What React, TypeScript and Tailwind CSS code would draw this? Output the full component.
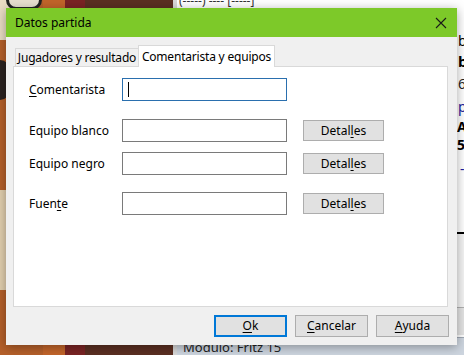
import React from "react";

const font = { fontFamily: '"Noto Sans", "Open Sans", sans-serif' };

function U({ children }: { children: React.ReactNode }) {
  return <span className="underline underline-offset-2">{children}</span>;
}

function Field({ label, mt, withButton }: { label: React.ReactNode; mt: string; withButton: boolean }) {
  return (
    <div className={`flex items-center ${mt}`}>
      <div className="w-[93px] whitespace-nowrap text-[12px] text-black">{label}</div>
      <div
        className={`h-[23px] w-[165px] bg-white ${
          withButton ? "border border-[#7a7a7a]" : "border border-[#2a6fae] flex items-center pl-[5px]"
        }`}
      >
        {!withButton && <div className="h-[15px] w-px bg-black" />}
      </div>
      {withButton && (
        <div className="ml-[16px] flex h-[21px] w-[81px] items-center justify-center whitespace-nowrap border border-[#adadad] bg-[#e1e1e1] text-[12px] text-black">
          Deta<span>l</span>
          <U>l</U>es
        </div>
      )}
    </div>
  );
}

export default function App() {
  return (
    <div className="relative h-[355px] w-[464px] overflow-hidden bg-white" style={font}>
      {/* background: chessboard left */}
      <div className="absolute left-0 top-0 h-[355px] w-[173px] bg-[#b5602a]">
        <div className="absolute left-0 top-0 h-[40px] w-[20px] bg-[#e9dcc4]" />
        <div className="absolute left-0 top-[190px] h-[100px] w-[20px] bg-[#e2cfae]" />
        <div className="absolute left-[6px] top-[-14px] h-[24px] w-[36px] rounded-b-[10px] border-[3px] border-[#222] bg-[#e8e0d0]" />
        <div className="absolute left-[-10px] top-[60px] h-[40px] w-[20px] rounded-full bg-[#2a2220]" />
        <div className="absolute left-[43px] top-0 h-[355px] w-[22px] bg-[#c2652a]" />
        <div className="absolute left-[65px] top-0 h-[355px] w-[20px] bg-[#7a2424]" />
        <div className="absolute left-[85px] top-0 h-[355px] w-[88px] bg-[#5b2f22]" />
      </div>
      {/* background: app right */}
      <div className="absolute left-[173px] top-0 h-[355px] w-[291px] border-l-4 border-[#d8d8d8] bg-white">
        <div className="absolute left-[2px] top-[-8px] whitespace-nowrap text-[12px] text-[#333]">(-----) ---- [-----]</div>
        <div className="absolute left-[281px] top-[30px] text-[14px] text-black">b</div>
        <div className="absolute left-[281px] top-[50px] text-[15px] font-bold text-black">b</div>
        <div className="absolute left-[281px] top-[73px] text-[14px] text-[#222]">6</div>
        <div className="absolute left-[281px] top-[96px] text-[14px] text-[#2020a0]">p</div>
        <div className="absolute left-[280px] top-[116px] whitespace-nowrap text-[14px] font-bold text-black">Ag</div>
        <div className="absolute left-[280px] top-[134px] text-[14px] font-bold text-black">5</div>
        <div className="absolute left-[283px] top-[158px] text-[14px] text-[#2020a0]">-</div>
        <div className="absolute left-[280px] top-[232px] h-[2px] w-[20px] bg-black" />
        <div className="absolute left-[280px] top-[234px] h-[73px] w-[20px] bg-[#f4f4f4]" />
        <div className="absolute left-[280px] top-[307px] h-[28px] w-[20px] border-t border-[#b0b0b0] bg-[#e4e4e4]" />
        <div className="absolute left-0 top-[337px] h-[18px] w-[291px] border-t border-[#a0a8b4] bg-[#cdd5df] pl-[6px] text-[13px] leading-[18px] text-[#222]">
          Modulo: Fritz 15
        </div>
      </div>

      {/* dialog */}
      <div className="absolute left-[6px] top-[8px] flex h-[337px] w-[451px] flex-col bg-[#f0f0f0] shadow-[0_2px_10px_rgba(0,0,0,0.35)]">
        <div className="flex h-[29px] items-center justify-between bg-[#7dc929] pl-[9px] pr-[10px]">
          <span className="text-[12px] text-black">Datos partida</span>
          <svg width="12" height="12" viewBox="0 0 12 12">
            <path d="M1 1 L11 11 M11 1 L1 11" stroke="#1a1a1a" strokeWidth="1.1" />
          </svg>
        </div>
        <div className="flex flex-1 flex-col px-[7px] pt-[8px]">
          <div className="flex items-end pl-[2px]">
            <div className="-mr-px flex h-[18px] w-[124px] items-center justify-center whitespace-nowrap border border-b-0 border-[#d9d9d9] bg-[#f0f0f0] text-[12px] tracking-[-0.2px] text-black">
              Jugadores y resultado
            </div>
            <div className="relative z-10 -mb-px flex h-[22px] w-[137px] items-center justify-center whitespace-nowrap border border-b-0 border-[#d9d9d9] bg-white text-[12px] tracking-[-0.2px] text-black">
              Comentarista y equipos
            </div>
          </div>
          <div className="flex h-[241px] w-[435px] flex-col border border-[#d9d9d9] bg-white pl-[15px] pt-[11px]">
            <Field label={<><U>C</U>omentarista</>} mt="mt-0" withButton={false} />
            <Field label="Equipo blanco" mt="mt-[18px]" withButton />
            <Field label="Equipo negro" mt="mt-[10px]" withButton />
            <Field label={<>Fuen<U>t</U>e</>} mt="mt-[17px]" withButton />
          </div>
          <div className="mt-[8px] flex justify-end gap-[8px] pr-[1px]">
            <div className="flex h-[22px] w-[73px] items-center justify-center border-2 border-[#0078d7] bg-[#e1e1e1] text-[12px] text-black">
              <U>O</U>k
            </div>
            <div className="flex h-[22px] w-[73px] items-center justify-center border border-[#adadad] bg-[#e1e1e1] text-[12px] text-black">
              <U>C</U>ancelar
            </div>
            <div className="flex h-[22px] w-[73px] items-center justify-center border border-[#adadad] bg-[#e1e1e1] text-[12px] text-black">
              <U>A</U>yuda
            </div>
          </div>
        </div>
      </div>
    </div>
  );
}
